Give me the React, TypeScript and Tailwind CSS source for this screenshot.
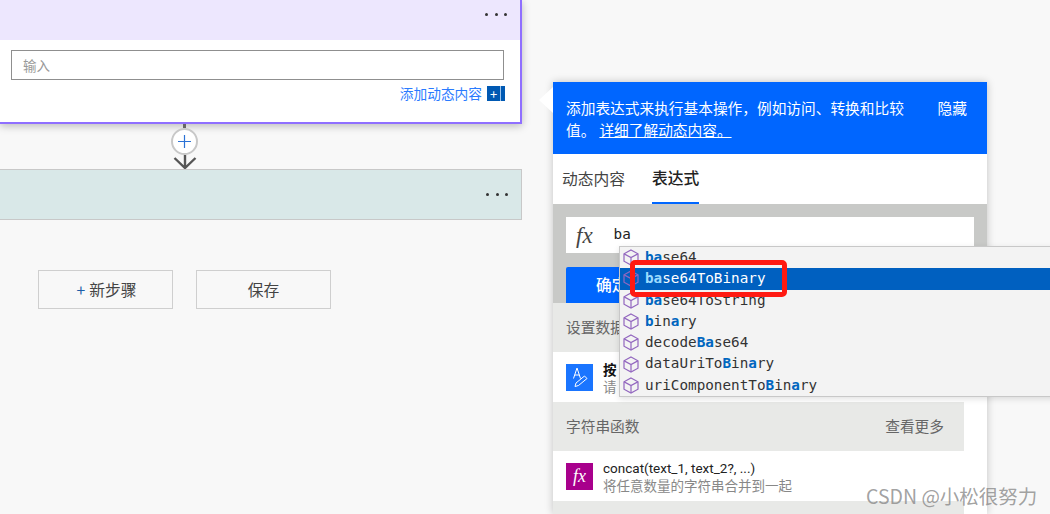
const cjk = "font-['Noto_Sans_CJK_SC','Noto_Sans',sans-serif]";

function Dots() {
  return (
    <div className="flex gap-[6.5px]">
      <span className="w-[3px] h-[3px] rounded-full bg-[#333]" />
      <span className="w-[3px] h-[3px] rounded-full bg-[#333]" />
      <span className="w-[3px] h-[3px] rounded-full bg-[#333]" />
    </div>
  );
}

function Cube() {
  return (
    <svg width="16" height="17" viewBox="0 0 16 17" fill="none" stroke="#9266bf" strokeWidth="1.2" className="shrink-0">
      <path d="M8 1 L15 4.8 V12.2 L8 16 L1 12.2 V4.8 Z" />
      <path d="M1.2 4.9 L8 8.6 L14.8 4.9 M8 8.6 V15.8" />
    </svg>
  );
}

const rows: [string, boolean][][] = [
  [["ba", true], ["se64", false]],
  [["ba", true], ["se64ToBinary", false]],
  [["ba", true], ["se64ToString", false]],
  [["b", true], ["in", false], ["a", true], ["ry", false]],
  [["decode", false], ["Ba", true], ["se64", false]],
  [["dataUriTo", false], ["B", true], ["in", false], ["a", true], ["ry", false]],
  [["uriComponentTo", false], ["B", true], ["in", false], ["a", true], ["ry", false]],
];

function Suggestions() {
  return (
    <div className="absolute left-[66px] top-[164px] w-[440px] h-[151px] bg-[#f3f3f3] border border-[#c8c8c8] shadow-[0_2px_6px_rgba(0,0,0,0.12)] font-['DejaVu_Sans_Mono',monospace] text-[14.3px] text-[#333] z-10">
      {rows.map((r, i) => (
        <div
          key={i}
          className={
            i === 1
              ? "h-[21.3px] flex items-center pl-[3px] gap-[6px] bg-[#0060c0] text-white font-medium"
              : "h-[21.3px] flex items-center pl-[3px] gap-[6px]"
          }
        >
          <Cube />
          <span className="whitespace-pre">
            {r.map(([t, hl], j) =>
              hl ? (
                <span key={j} className={i === 1 ? "font-bold text-[#9cdcfe]" : "font-bold text-[#0066bf]"}>{t}</span>
              ) : (
                <span key={j}>{t}</span>
              )
            )}
          </span>
        </div>
      ))}
    </div>
  );
}

function SectionHead({ title, more, full }: { title: string; more?: string; full?: boolean }) {
  return (
    <div className={`h-[49px] shrink-0 flex items-center justify-between bg-[#e8e9e7] pl-[13px] pr-[20px] text-[14.7px] text-[#666] ${full ? "" : "w-[411px]"}`}>
      <span>{title}</span>
      {more && <span>{more}</span>}
    </div>
  );
}

function FnRow({ icon, title, desc, bold }: { icon: React.ReactNode; title: string; desc: string; bold?: boolean }) {
  return (
    <div className="h-[50px] shrink-0 flex items-center pl-[13px] gap-[10px] w-[411px] bg-white">
      {icon}
      <div className="flex flex-col leading-[17px] pt-[1px]">
        <span className={bold ? "text-[13.5px] font-bold text-[#111]" : "text-[13.5px] text-[#222] font-['Roboto',sans-serif]"}>{title}</span>
        <span className="text-[13.5px] text-[#888]">{desc}</span>
      </div>
    </div>
  );
}

function Panel() {
  return (
    <div className="relative w-[434px] h-[432px] mt-[82px] ml-[31px] bg-white shadow-[0_0_8px_rgba(0,0,0,0.22)] flex flex-col shrink-0">
      <div className="absolute -left-[14px] top-[5px] w-0 h-0 border-y-[13px] border-y-transparent border-r-[14px] border-r-white" />
      <div className="h-[72px] shrink-0 bg-[#0066ff] text-white text-[14.7px] leading-[22px] flex pl-[13px] pr-[20px] pt-[15px]">
        <div className="w-[345px]">
          添加表达式来执行基本操作，例如访问、转换和比较值。
          <span className="underline ml-[4px]">详细了解动态内容。</span>
        </div>
        <span className="ml-auto">隐藏</span>
      </div>
      <div className="h-[50px] shrink-0 flex gap-[27px] pl-[9px] text-[15.75px]">
        <div className="h-full flex items-center text-[#444]">动态内容</div>
        <div className="h-full flex items-center font-medium text-[#222] border-b-[2px] border-[#0066ff]">表达式</div>
      </div>
      <div className="h-[99px] shrink-0 bg-[#c8c9c7] px-[13px] pt-[13px] flex flex-col gap-[14px]">
        <div className="h-[36px] bg-white flex items-center pl-[10px] gap-[21px]">
          <span className="font-['Liberation_Serif',serif] italic text-[23px] text-[#444] leading-none">fx</span>
          <span className="font-['DejaVu_Sans_Mono',monospace] text-[14.3px] text-[#222] mb-[1px]">ba</span>
        </div>
        <div className="h-[36px] bg-[#0066ff] rounded-t-[2px] flex items-center pl-[30px] text-white text-[15.75px] font-medium">确定</div>
      </div>
      <SectionHead title="设置数据" full />
      <FnRow
        bold
        title="按"
        desc="请"
        icon={
          <div className="w-[27px] h-[27px] bg-[#1a75ff] shrink-0">
            <svg width="27" height="27" viewBox="0 0 27 27" fill="none" stroke="white" strokeWidth="1">
              <path d="M7.5 14.5 L11 4 L14.5 14.5 M8.7 11 H13.3" />
              <path d="M9 22.5 L10 19 L18.5 12 L21 14.5 L12.5 21.5 Z" />
            </svg>
          </div>
        }
      />
      <SectionHead title="字符串函数" more="查看更多" />
      <FnRow
        title="concat(text_1, text_2?, ...)"
        desc="将任意数量的字符串合并到一起"
        icon={
          <div className="w-[27px] h-[27px] bg-[#a8008c] shrink-0 flex items-center justify-center font-['Liberation_Serif',serif] italic text-white text-[18px]">fx</div>
        }
      />
      <div className="flex-1 w-[411px] bg-[#e8e9e7]" />
      <Suggestions />
    </div>
  );
}

function Connector() {
  return (
    <div className="h-[45px] w-[27px] ml-[171px] flex flex-col items-center">
      <div className="w-[3px] h-[4px] shrink-0 bg-[#666]" />
      <div className="w-[27px] h-[27px] shrink-0 rounded-full border-2 border-[#c8c8c8] bg-white flex items-center justify-center">
        <svg width="13" height="13" viewBox="0 0 13 13" stroke="#2b72d6" strokeWidth="1.2"><path d="M6.5 0 V13 M0 6.5 H13" /></svg>
      </div>
      <svg width="24" height="14" viewBox="0 0 24 14" fill="none" stroke="#555" strokeWidth="2.4" className="shrink-0">
        <path d="M12 0 V13 M1.5 3 L12 13 L22.5 3" />
      </svg>
    </div>
  );
}

export default function App() {
  return (
    <div className={`relative w-[1050px] h-[514px] overflow-hidden bg-[#f8f8f8] flex ${cjk}`}>
      <div className="w-[522px] shrink-0 flex flex-col">
        <div className="h-[124px] bg-white border-r-2 border-b-2 border-[#8f6fff] shadow-[0_2px_8px_rgba(0,0,0,0.25)] flex flex-col">
          <div className="h-[40px] bg-[#ede7fe] flex items-start justify-end pr-[13px] pt-[13px] shrink-0">
            <Dots />
          </div>
          <div className="pl-[11px] pr-[16px] pt-[10px]">
            <div className="h-[30px] border border-[#8f8f8f] flex items-center pl-[11px] text-[13.5px] text-[#999]">输入</div>
            <div className="flex justify-end items-center gap-[5px] mt-[6px] -mr-[1px]">
              <span className="text-[13.7px] leading-[15px] text-[#2a7bff]">添加动态内容</span>
              <div className="w-[18px] h-[15px] bg-[#0059b3] text-white text-[13px] leading-[13px] flex items-center pl-[3px] relative">
                +
                <span className="absolute right-[4px] top-0 w-px h-full bg-[#9cc4ec]" />
              </div>
            </div>
          </div>
        </div>
        <Connector />
        <div className="h-[51px] bg-[#d9e8e8] border border-[#c8c8c8] border-l-0 flex items-center justify-end pr-[13px] shrink-0">
          <Dots />
        </div>
        <div className="flex gap-[23px] pl-[38px] mt-[50px]">
          <div className="w-[135px] h-[39px] border border-[#cfcfcf] flex items-center justify-center text-[15.75px] text-[#444] pl-[2px]">
            <span className="text-[#1d5fa8] mr-[4px]">+</span>新步骤
          </div>
          <div className="w-[135px] h-[39px] border border-[#cfcfcf] flex items-center justify-center text-[15.75px] text-[#444]">保存</div>
        </div>
      </div>
      <Panel />
      <div className="absolute left-[630px] top-[260px] w-[157px] h-[37px] border-[5px] border-[#ff1a12] rounded-[5px] z-20" />
      <div className="absolute left-[866px] top-[481px] z-20 text-[19.5px] text-[#8a8a8a]/80 whitespace-nowrap">CSDN @小松很努力</div>
    </div>
  );
}
